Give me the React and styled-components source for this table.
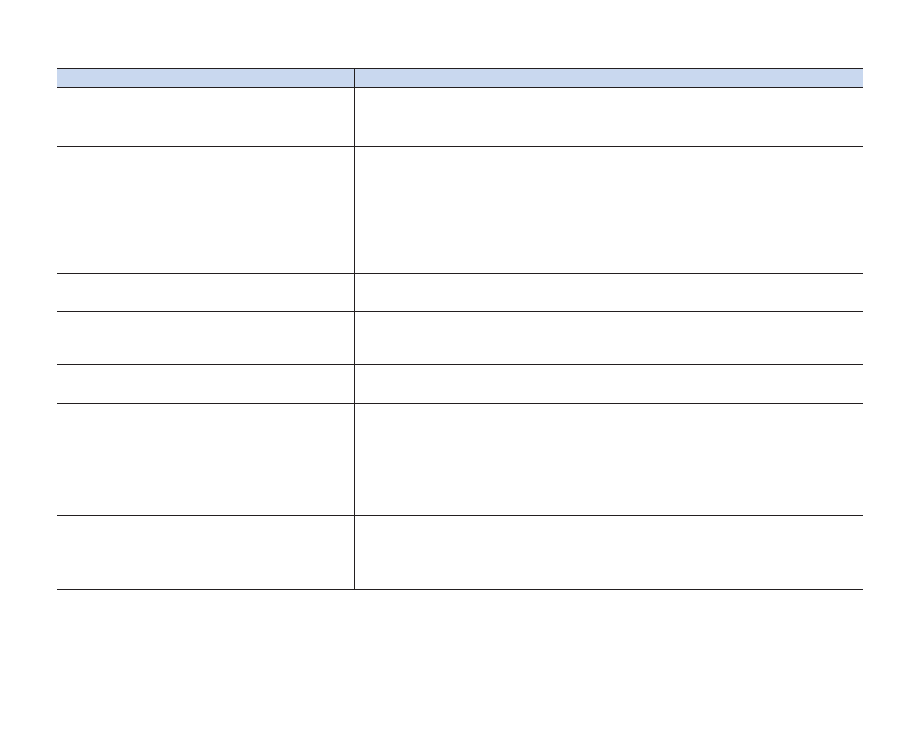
import React from 'react';
import styled, { createGlobalStyle } from 'styled-components';

const GlobalStyle = createGlobalStyle`
  body {
    margin: 0;
    background: #ffffff;
    font-family: "Liberation Sans", Arial, sans-serif;
  }
`;

const Page = styled.div`
  padding: 68px 0 0 57px;
  min-height: 737px;
  box-sizing: border-box;
`;

const Table = styled.div`
  width: 806px;
  border-top: 1px solid #231f20;
`;

const Row = styled.div`
  display: grid;
  grid-template-columns: 298px 1fr;
  height: ${p => p.h}px;
  box-sizing: border-box;
  border-bottom: 1px solid #231f20;
  background: ${p => (p.head ? '#c9d8ef' : 'transparent')};
`;

const Cell = styled.div`
  box-sizing: border-box;
  font-size: 11px;
  color: #231f20;
  padding: 4px 6px;
  &:first-child {
    border-right: 1px solid #231f20;
  }
`;

const rows = [59, 127, 38, 53, 39, 112, 74];

export default function App() {
  return (
    <Page>
      <GlobalStyle />
      <Table>
        <Row head h={19}>
          <Cell />
          <Cell />
        </Row>
        {rows.map((h, i) => (
          <Row key={i} h={h}>
            <Cell />
            <Cell />
          </Row>
        ))}
      </Table>
    </Page>
  );
}
